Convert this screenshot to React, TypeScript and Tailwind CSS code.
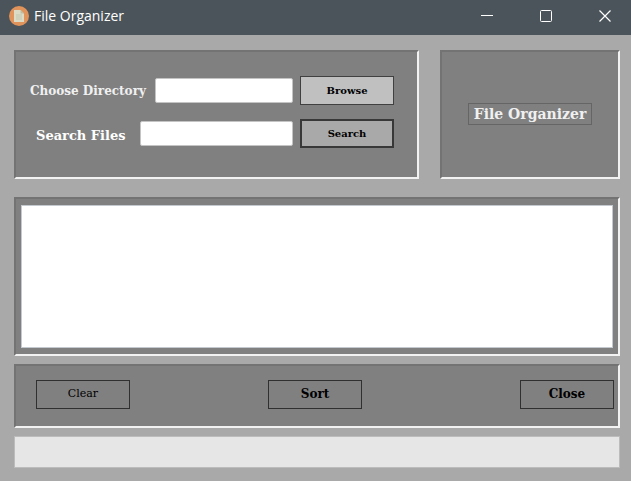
import { useState } from "react";
import type { ReactNode } from "react";

const panel =
  "border-2 border-t-[#737373] border-l-[#737373] border-r-[#f2f2f2] border-b-[#f2f2f2] bg-[#808080]";
const serif = "font-['DejaVu_Serif','Liberation_Serif',serif]";
const windowButton = "flex h-7 w-[46px] items-center justify-center";

function TitleBar() {
  return (
    <header className="flex h-[35px] items-center bg-[#4b545a] pr-[3px] pb-1 pl-[9px] text-white">
      <svg width="20" height="20" viewBox="0 0 20 20" className="shrink-0" aria-hidden="true">
        <circle cx="10" cy="10" r="10" fill="#e0935a" />
        <path d="M5 4h6.500l3.500 3.500V16H5z" fill="#dcdcc6" />
        <path d="M11.500 4v3.500H15z" fill="#b9bda6" />
        <path d="M7 9h6M7 11h6M7 13h6" stroke="#c3c6b1" strokeWidth="1" />
      </svg>
      <h1 className="ml-[5px] flex-1 font-['Open_Sans','Noto_Sans',sans-serif] text-[14px] leading-5">
        File Organizer
      </h1>
      <div className="flex gap-[13px]">
        <button type="button" aria-label="Minimize" className={windowButton}>
          <svg width="12" height="12" viewBox="0 0 12 12" stroke="#fff" fill="none" aria-hidden="true">
            <path d="M0 5.500h12" />
          </svg>
        </button>
        <button type="button" aria-label="Maximize" className={windowButton}>
          <svg width="12" height="12" viewBox="0 0 12 12" stroke="#fff" fill="none" aria-hidden="true">
            <rect x="0.500" y="0.500" width="11" height="11" rx="1" />
          </svg>
        </button>
        <button type="button" aria-label="Close window" className={windowButton}>
          <svg width="12" height="12" viewBox="0 0 12 12" stroke="#fff" strokeWidth="1.200" fill="none" aria-hidden="true">
            <path d="M0.500 0.500l11 11M11.500 0.500l-11 11" />
          </svg>
        </button>
      </div>
    </header>
  );
}

function ToolButton({ children, look, onClick }: { children: ReactNode; look: string; onClick?: () => void }) {
  return (
    <button
      type="button"
      onClick={onClick}
      className={`flex h-[29px] w-[94px] shrink-0 items-center justify-center leading-4 text-black ${look}`}
    >
      {children}
    </button>
  );
}

const field =
  "h-[25px] w-0 min-w-0 flex-1 rounded-[2px] border border-[#c4c4c4] bg-white px-1 text-[12px] text-black outline-none";

export default function App() {
  const [directory, setDirectory] = useState("");
  const [query, setQuery] = useState("");

  return (
    <div className={`flex min-h-screen flex-col bg-[#a9a9a9] ${serif}`}>
      <TitleBar />
      <main className="flex flex-1 flex-col pt-[15px] pr-[11px] pb-[13px] pl-[14px]">
        <div className="flex gap-[21px]">
          <section className={`flex min-w-0 flex-1 flex-col gap-[14px] pt-6 pr-[23px] pb-[29px] ${panel}`}>
            <div className="flex h-[29px] items-center pl-[14px]">
              <label
                htmlFor="directory"
                className="w-[125px] shrink-0 text-[12px] leading-4 font-bold whitespace-nowrap text-[#f0f0f0]"
              >
                Choose Directory
              </label>
              <input id="directory" value={directory} onChange={(e) => setDirectory(e.target.value)} className={field} />
              <div className="ml-[7px]">
                <ToolButton look="border border-[#404040] bg-[#c0c0c0] text-[10px] font-bold">Browse</ToolButton>
              </div>
            </div>
            <div className="flex h-[29px] items-center pl-[20px]">
              <label
                htmlFor="search"
                className="w-[104px] shrink-0 pt-1 text-[13px] leading-4 font-bold whitespace-nowrap text-white"
              >
                Search Files
              </label>
              <input id="search" value={query} onChange={(e) => setQuery(e.target.value)} className={field} />
              <div className="ml-[7px]">
                <ToolButton look="border-2 border-[#383838] bg-[#a9a9a9] text-[10px] font-bold">Search</ToolButton>
              </div>
            </div>
          </section>
          <section className={`flex w-[180px] shrink-0 items-center justify-center pb-[2px] ${panel}`}>
            <h2 className="flex h-[22px] w-[124px] items-center justify-center border border-[#656565] text-[14px] leading-5 font-bold whitespace-nowrap text-[#f0f0f0]">
              File Organizer
            </h2>
          </section>
        </div>

        <section className={`mt-[18px] flex min-h-[159px] flex-1 px-[5px] py-[6px] ${panel}`}>
          <textarea
            aria-label="Files"
            className="w-full flex-1 resize-none border border-[#c3c9cf] bg-white p-1 text-[12px] text-black outline-none"
          />
        </section>

        <section className={`mt-2 grid h-16 grid-cols-[1fr_auto_1fr] items-center pr-[4px] pb-1 ${panel}`}>
          <div className="pl-[20px]">
            <ToolButton
              look="border border-[#303030] text-[11px]"
              onClick={() => {
                setDirectory("");
                setQuery("");
              }}
            >
              Clear
            </ToolButton>
          </div>
          <ToolButton look="border border-[#303030] text-[12px] font-bold">Sort</ToolButton>
          <div className="flex justify-end">
            <ToolButton look="border border-[#303030] text-[12px] font-bold">Close</ToolButton>
          </div>
        </section>

        <div role="progressbar" aria-label="Progress" className="mt-2 h-8 border border-[#bcbcbc] bg-[#e6e6e6]" />
      </main>
    </div>
  );
}
